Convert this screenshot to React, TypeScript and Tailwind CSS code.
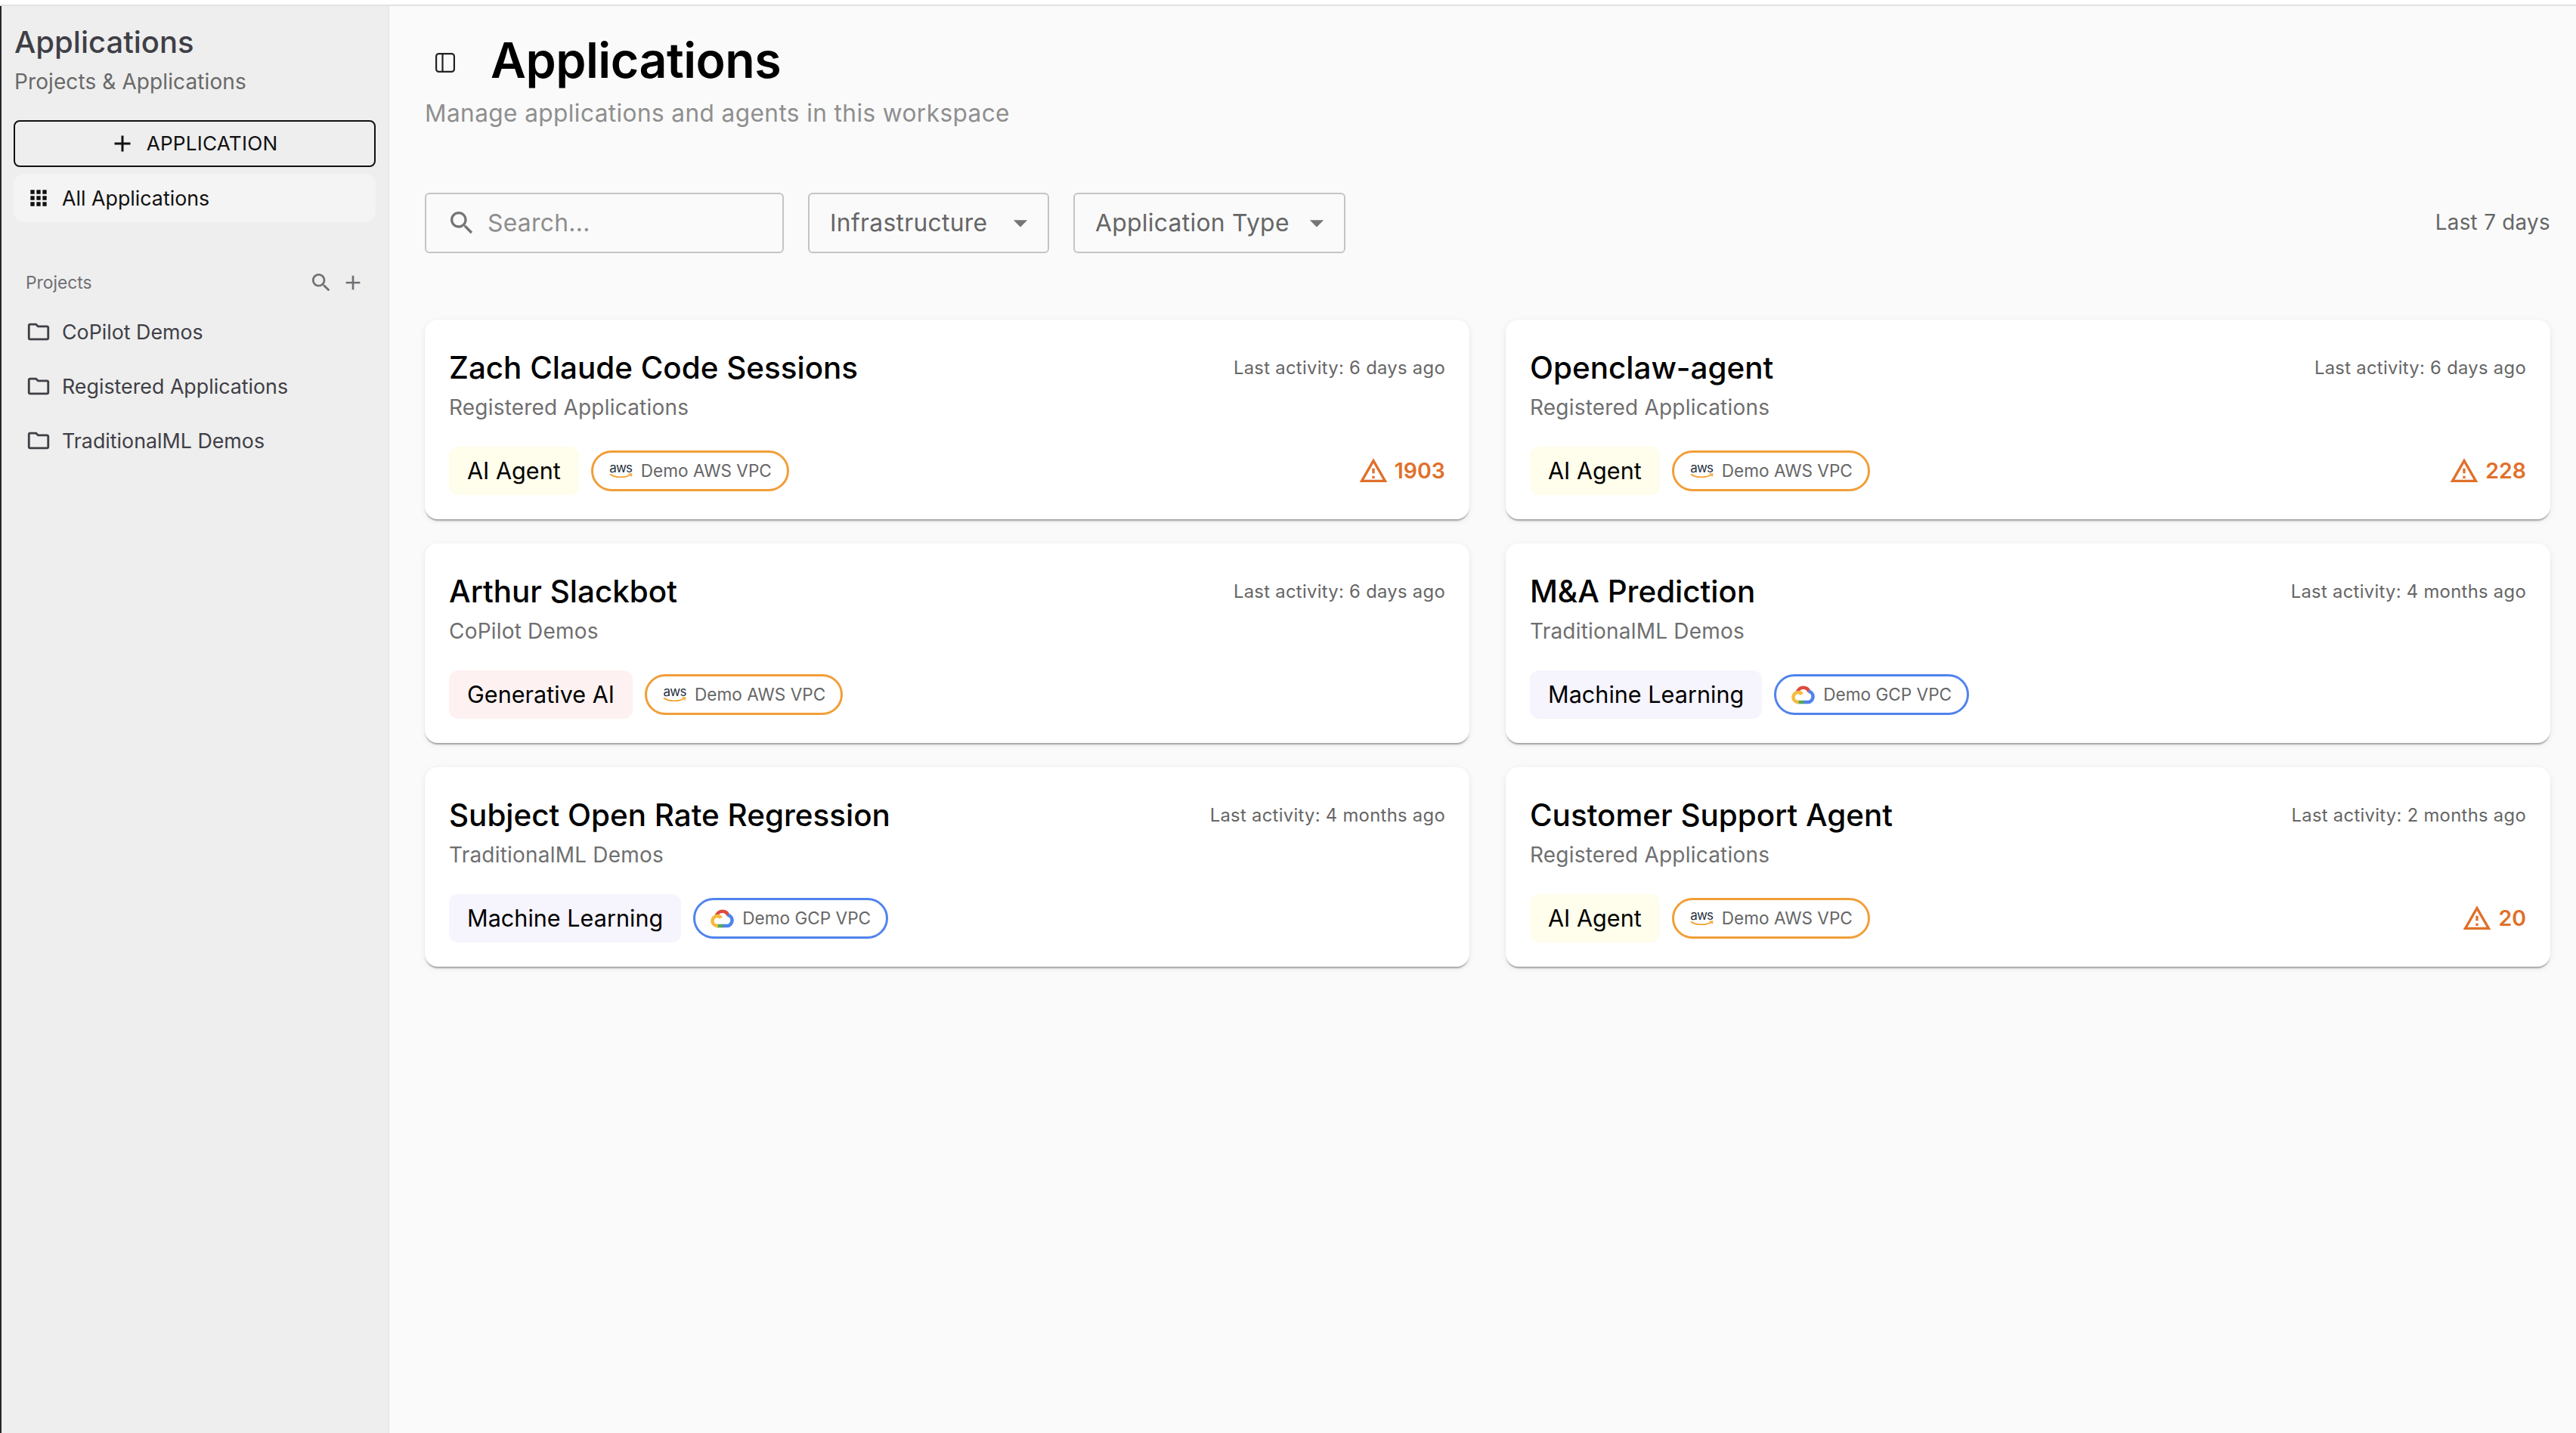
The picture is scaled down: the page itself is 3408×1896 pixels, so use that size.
const iconPaths = {
  search: "M15.5 14h-.79l-.28-.27C15.41 12.59 16 11.11 16 9.5 16 5.91 13.09 3 9.5 3S3 5.91 3 9.5 5.91 16 9.5 16c1.61 0 3.09-.59 4.23-1.57l.27.28v.79l5 4.99L20.49 19l-4.99-5zm-6 0C7.01 14 5 11.99 5 9.5S7.01 5 9.5 5 14 7.01 14 9.5 11.99 14 9.5 14z",
  add: "M19 13h-6v6h-2v-6H5v-2h6V5h2v6h6v2z",
  apps: "M4 8h4V4H4v4zm6 12h4v-4h-4v4zm-6 0h4v-4H4v4zm0-6h4v-4H4v4zm6 0h4v-4h-4v4zm6-10v4h4V4h-4zm-6 4h4V4h-4v4zm6 6h4v-4h-4v4zm0 6h4v-4h-4v4z",
  folder: "M9.17 6l2 2H20v10H4V6h5.17M10 4H4c-1.1 0-1.99.9-1.99 2L2 18c0 1.1.9 2 2 2h16c1.1 0 2-.9 2-2V8c0-1.1-.9-2-2-2h-8l-2-2z",
  warn: "M12 5.99 19.53 19H4.47L12 5.99M12 2 1 21h22L12 2zm1 14h-2v2h2v-2zm0-6h-2v4h2v-4z",
  drop: "M7 10l5 5 5-5z",
};

function Icon({ name, className }: { name: keyof typeof iconPaths; className: string }) {
  return (
    <svg viewBox="0 0 24 24" fill="currentColor" className={className}>
      <path d={iconPaths[name]} />
    </svg>
  );
}

function AwsLogo() {
  return (
    <span className="flex w-[31px] shrink-0 flex-col items-center">
      <span className="text-[17px] leading-[14px] tracking-[-0.8px] text-[#252f3e]">aws</span>
      <svg viewBox="0 0 30 8" className="h-[8px] w-[31px]">
        <path d="M0.5 1.5C8 6.5 20 6.500 28 2" fill="none" stroke="#f49c20" strokeWidth="1.600" />
        <path d="M25 0.800L29.300 1l-1 3.600" fill="none" stroke="#f49c20" strokeWidth="1.200" />
      </svg>
    </span>
  );
}

function GcpLogo() {
  return (
    <svg viewBox="0 0 27 22" fill="none" strokeWidth="4" className="h-[25px] w-[31px] shrink-0">
      <path d="M6.5 8.6C7.5 4.6 10.5 2.4 13.7 2.4c3.2 0 5.8 1.8 6.8 5" stroke="#dd4b3e" />
      <path d="M19.8 6.9c3.2.4 5.2 3 5.2 5.9 0 3.4-2.5 6.6-6 6.6h-5.6" stroke="#5083ee" />
      <path d="M14.5 19.4H7" stroke="#55a85b" />
      <path d="M8.5 19.4C4.700 19.400 2 16.800 2 13.600c0-3.100 2.600-5.700 5.800-5.700 1.900 0 3.400.8 4.400 2.300" stroke="#f5bb3d" />
    </svg>
  );
}

type Card = {
  name: string;
  project: string;
  activity: string;
  kind: "AI Agent" | "Generative AI" | "Machine Learning";
  cloud: "aws" | "gcp";
  alerts?: number;
};

const cards: Card[] = [
  { name: "Zach Claude Code Sessions", project: "Registered Applications", activity: "Last activity: 6 days ago", kind: "AI Agent", cloud: "aws", alerts: 1903 },
  { name: "Openclaw-agent", project: "Registered Applications", activity: "Last activity: 6 days ago", kind: "AI Agent", cloud: "aws", alerts: 228 },
  { name: "Arthur Slackbot", project: "CoPilot Demos", activity: "Last activity: 6 days ago", kind: "Generative AI", cloud: "aws" },
  { name: "M&A Prediction", project: "TraditionalML Demos", activity: "Last activity: 4 months ago", kind: "Machine Learning", cloud: "gcp" },
  { name: "Subject Open Rate Regression", project: "TraditionalML Demos", activity: "Last activity: 4 months ago", kind: "Machine Learning", cloud: "gcp" },
  { name: "Customer Support Agent", project: "Registered Applications", activity: "Last activity: 2 months ago", kind: "AI Agent", cloud: "aws", alerts: 20 },
];

const kindColors = {
  "AI Agent": "bg-[#fffdeb]",
  "Generative AI": "bg-[#fdf2f1]",
  "Machine Learning": "bg-[#f6f4fd]",
};

function AppCard({ card }: { card: Card }) {
  return (
    <div className="flex h-[264px] flex-col rounded-[17px] bg-white px-[32px] pt-[38px] shadow-[0_3px_2px_-1px_rgba(0,0,0,0.32),0_2px_9px_0_rgba(0,0,0,0.08)]">
      <div className="flex items-center justify-between">
        <span className="text-[40.4px] leading-[52px] font-medium text-black">{card.name}</span>
        <span className="text-[23.8px] tracking-[0.3px] text-[#666666]">{card.activity}</span>
      </div>
      <div className="mt-[1px] text-[28px] leading-[50px] tracking-[0.2px] text-[#6f6f6f]">{card.project}</div>
      <div className="mt-[27px] flex items-center justify-between">
        <div className="flex items-center gap-[16px]">
          <span className={`flex h-[64px] items-center rounded-[12px] px-[24px] text-[30.6px] text-black ${kindColors[card.kind]}`}>
            {card.kind}
          </span>
          {card.cloud === "aws" ? (
            <span className="flex h-[54px] items-center gap-[11px] rounded-full border-[3px] border-[#f19e38] pr-[20px] pl-[21px] text-[22.6px] text-[#666666]">
              <AwsLogo />
              Demo AWS VPC
            </span>
          ) : (
            <span className="flex h-[54px] items-center gap-[11px] rounded-full border-[3px] border-[#5083ee] pr-[20px] pl-[20px] text-[22.6px] text-[#666666]">
              <GcpLogo />
              Demo GCP VPC
            </span>
          )}
        </div>
        {card.alerts !== undefined && (
          <span className="flex items-center gap-[8px] text-[28.5px] font-semibold text-[#e0702a]">
            <Icon name="warn" className="h-[40px] w-[40px]" />
            {card.alerts}
          </span>
        )}
      </div>
    </div>
  );
}

function Sidebar() {
  return (
    <aside className="flex w-[513px] shrink-0 flex-col border-r-[2px] border-[#e8e8ec] bg-[#eeeeee] pt-[20px]">
      <div className="pl-[17px] text-[40px] leading-[56px] font-medium text-[#3f3f46]">Applications</div>
      <div className="pl-[17px] text-[28px] leading-[48px] tracking-[0.1px] text-[#696969]">Projects &amp; Applications</div>
      <button className="mx-[16px] mt-[27px] flex h-[62px] items-center justify-center gap-[14px] rounded-[8px] border-[2px] border-[#111111] pr-[4px] text-[26.2px] tracking-[0.2px] text-[#111111]">
        <Icon name="add" className="h-[36px] w-[36px]" />
        APPLICATION
      </button>
      <div className="mx-[16px] mt-[9px] flex h-[64px] items-center gap-[15px] rounded-[14px] bg-[#f4f4f4] pl-[17px] text-[26.8px] text-[#111111]">
        <Icon name="apps" className="h-[32px] w-[32px]" />
        All Applications
      </div>
      <div className="mt-[59px] flex h-[42px] items-center justify-between pr-[30px] pl-[32px] text-[22.8px] text-[#6f6f75]">
        Projects
        <span className="flex items-center gap-[10px]">
          <Icon name="search" className="h-[32px] w-[32px]" />
          <Icon name="add" className="h-[32px] w-[32px]" />
        </span>
      </div>
      <div className="mt-[12px] flex flex-col gap-[8px] pl-[32px] text-[26.8px] text-[#3f3f46]">
        {["CoPilot Demos", "Registered Applications", "TraditionalML Demos"].map((project) => (
          <div key={project} className="flex h-[64px] items-center gap-[14px]">
            <Icon name="folder" className="h-[34px] w-[34px]" />
            {project}
          </div>
        ))}
      </div>
    </aside>
  );
}

function Filter({ label, width }: { label: string; width: string }) {
  return (
    <div className={`flex h-[80px] items-center justify-between rounded-[6px] border-[2px] border-[#c4c4c4] pr-[14px] pl-[27px] text-[31.8px] tracking-[0.3px] text-[#666666] ${width}`}>
      {label}
      <Icon name="drop" className="h-[44px] w-[44px] text-[#757575]" />
    </div>
  );
}

export default function App() {
  return (
    <div className="flex h-[1896px] w-[3408px] flex-col overflow-hidden bg-white font-['Inter',sans-serif]">
      <div className="h-[8px] shrink-0 border-b-[2px] border-[#e2e2e2] bg-white" />
      <div className="flex min-h-0 flex-1 border-l-[2px] border-[#27272b]">
        <Sidebar />
        <main className="flex flex-1 flex-col bg-[#fafafa] pt-[34px] pr-[34px] pl-[47px]">
          <div className="flex h-[76px] items-center">
            <svg viewBox="0 0 26 26" fill="none" stroke="#222222" strokeWidth="2.2" className="mt-[6px] ml-[14px] h-[26px] w-[26px]">
              <rect x="1.100" y="1.100" width="23.800" height="23.800" rx="3.500" />
              <path d="M9.500 1.100V24.900" />
            </svg>
            <h1 className="ml-[47px] text-[64.5px] font-semibold tracking-[-0.5px] text-black">Applications</h1>
          </div>
          <p className="mt-[10px] text-[31.6px] leading-[44px] tracking-[0.4px] text-[#8f8f8f]">Manage applications and agents in this workspace</p>
          <div className="mt-[83px] flex items-center gap-[32px]">
            <div className="flex h-[80px] w-[475px] items-center gap-[14px] rounded-[6px] border-[2px] border-[#c4c4c4] pl-[27px] text-[31.8px] tracking-[0.3px] text-[#8e8e8e]">
              <Icon name="search" className="h-[40px] w-[40px] text-[#757575]" />
              Search...
            </div>
            <Filter label="Infrastructure" width="w-[319px]" />
            <Filter label="Application Type" width="w-[360px]" />
            <span className="ml-auto text-[27.8px] tracking-[0.3px] text-[#666666]">Last 7 days</span>
          </div>
          <div className="mt-[88px] grid grid-cols-2 gap-x-[48px] gap-y-[32px]">
            {cards.map((card) => (
              <AppCard key={card.name} card={card} />
            ))}
          </div>
        </main>
      </div>
    </div>
  );
}
